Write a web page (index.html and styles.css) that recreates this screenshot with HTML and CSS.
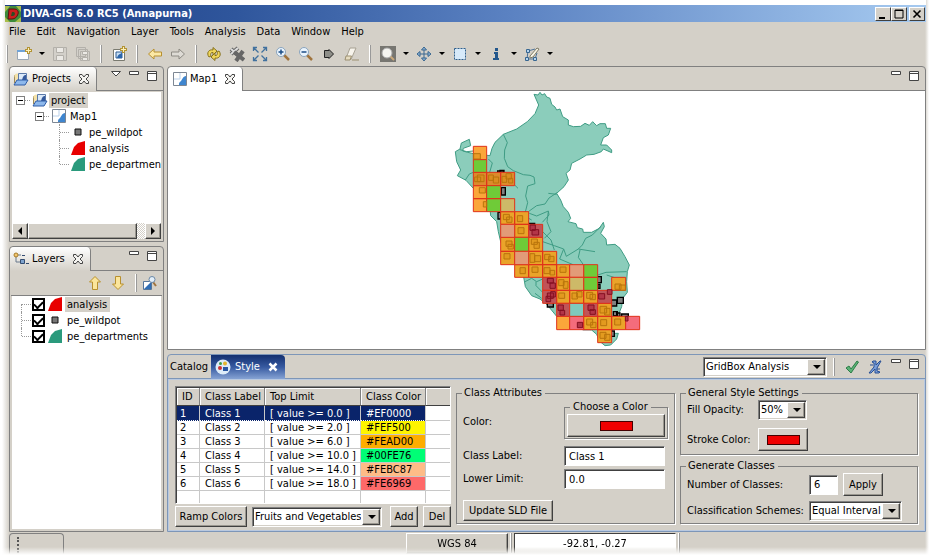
FILE: index.html
```html
<!DOCTYPE html>
<html lang="en">
<head>
    <meta charset="UTF-8">
    <meta name="viewport" content="width=device-width, initial-scale=1.0">
    <title>DIVA-GIS 6.0 RC5 (Annapurna)</title>
    <link rel="stylesheet" href="styles.css">
</head>
<body>
    <!-- shared icons -->
    <svg class="defs" width="0" height="0">
        <symbol id="i-close" viewBox="0 0 12 12"><path d="M1.5 1.5h2.5l2 2.5 2-2.5h2.5v2L8 6l2.500 2.500v2H8L6 8l-2 2.500H1.500v-2L4 6 1.500 3.500z" fill="#f4f3f0" stroke="#444"/></symbol>
        <symbol id="i-min" viewBox="0 0 12 12"><path d="M1.500 1.500h9v3h-9z" fill="#fff" stroke="#444"/></symbol>
        <symbol id="i-max" viewBox="0 0 12 12"><path d="M1.500 1.500h9v9h-9zM1.500 3.500h9" fill="#fff" stroke="#444"/></symbol>
        <symbol id="i-map" viewBox="0 0 14 14"><path d="M.5.5h13v13H.5z" fill="#fff" stroke="#7d8794"/><path d="M1 7h6M7 1v6" stroke="#b9d0ea"/><path d="M6 13c0-3 1-3 2-4s2-5 5-5v9z" fill="#3f86cf"/></symbol>
        <symbol id="i-folder" viewBox="0 0 16 14"><path d="M1.500 11V3.500h4V6" fill="#f3dfae" stroke="#9b8a5b"/><circle cx="4" cy="4" r="2.500" fill="#f5e2a8"/><path d="M5.500 1.500h8v8h-8z" fill="#dbe9f8" stroke="#5b79a8"/><path d="M9 8c1-4 2-5 4-5v6H9z" fill="#34599c"/><path d="M1 13L4 8h11l-3 5z" fill="#8db8ec" stroke="#2f5ca6"/></symbol>
        <symbol id="i-point" viewBox="0 0 14 14"><path d="M4 4h6v6H4z" fill="#777" stroke="#111"/></symbol>
        <symbol id="i-red" viewBox="0 0 14 14"><path d="M0 14L3 6l4-4 7-2v14z" fill="#e80000"/></symbol>
        <symbol id="i-green" viewBox="0 0 14 14"><path d="M0 14L3 6l4-4 7-2v14z" fill="#2a9a7c"/></symbol>
    </svg>

    <div class="window">
        <header class="titlebar">
            <svg class="logo" width="16" height="16" viewBox="0 0 16 16"><path d="M0 0h16v16H0z" fill="#3d8a3a"/><path d="M0 0h5L0 6zM11 0h5v6zM0 11l5 5H0zM16 11v5h-6z" fill="#a9bd4b"/><path d="M4 3h5c3 0 5 2 4 5s-3 5-6 5H3z" fill="#c81e1e" stroke="#5c1111"/><path d="M7 6h1.500c2 0 2 4-1 4H6z" fill="#2b4b23"/></svg>
            <h1>DIVA-GIS 6.0 RC5 (Annapurna)</h1>
            <div class="win-buttons">
                <button aria-label="Minimize"><svg width="10" height="10"><path d="M1 8h6v2H1z"/></svg></button>
                <button aria-label="Maximize"><svg width="10" height="10"><path d="M1 1h8v8H1zM1 1.500h8" fill="none" stroke="#000"/></svg></button>
                <button class="quit" aria-label="Close"><svg width="10" height="10"><path d="M1.500 1.500l7 7M8.500 1.500l-7 7" fill="none" stroke="#000" stroke-width="1.600"/></svg></button>
            </div>
        </header>

        <nav class="menubar">
            <a href="#">File</a><a href="#">Edit</a><a href="#">Navigation</a><a href="#">Layer</a><a href="#">Tools</a><a href="#">Analysis</a><a href="#">Data</a><a href="#">Window</a><a href="#">Help</a>
        </nav>

        <div class="toolbar">
            <span class="sep first"></span>
            <button aria-label="New"><svg width="16" height="16" viewBox="0 0 16 16"><path d="M1.500 4.500h11v9h-11z" fill="#fbfdff" stroke="#9aa7b5"/><path d="M1 4h9v2H1z" fill="#6fa3d8"/><path d="M12.500 1v7M9 4.500h7" stroke="#b39436" stroke-width="3"/><path d="M12.500 2v5M10 4.500h5" stroke="#fdf0b8"/></svg></button>
            <button class="drop" aria-label="New menu"></button>
            <button aria-label="Save"><svg width="16" height="16" viewBox="0 0 16 16" fill="#d3d0ca" stroke="#b3b0aa"><path d="M1.500 1.500h13v13h-13z"/><path d="M4.500 1.500h7v5h-7zM4.500 9.500h7v5h-7z" fill="#eceae6"/></svg></button>
            <button aria-label="Save all"><svg width="16" height="16" viewBox="0 0 16 16" fill="#d3d0ca" stroke="#b3b0aa"><path d="M1.500 1.500h9v9h-9zM3.500 3.500h9v9h-9zM5.500 5.500h9v9h-9z"/><path d="M7.500 5.500h5v3h-5zM7.500 11.500h5v3h-5z" fill="#eceae6"/></svg></button>
            <span class="sep"></span>
            <button aria-label="New map"><svg width="16" height="16" viewBox="0 0 16 16"><path d="M2.500 3.500h11v11h-11z" fill="#fff" stroke="#7a7a70"/><path d="M5 6h6v6H5z" fill="#c8def3" stroke="#2c5c94"/><path d="M6 12c1-4 3-4 5-5v5z" fill="#2c66ab"/><path d="M12.500 0v7M9 3.500h7" stroke="#b39436" stroke-width="3"/><path d="M12.500 1v5M10 3.500h5" stroke="#fdf0b8"/></svg></button>
            <span class="sep"></span>
            <button aria-label="Back"><svg width="16" height="16" viewBox="0 0 16 16"><path d="M1.500 8L7 3v3h7.500v4H7v3z" fill="#fbe8a6" stroke="#b8902f"/></svg></button>
            <button aria-label="Forward"><svg width="16" height="16" viewBox="0 0 16 16"><path d="M14.500 8L9 3v3H1.500v4H9v3z" fill="#dedbd5" stroke="#8e8b84"/></svg></button>
            <span class="sep"></span>
            <button aria-label="Refresh"><svg width="16" height="16" viewBox="0 0 16 16"><path d="M3 11C0 7 3 3 7 4V1.500L11 5 7 9V6.500C5 6 4 8 5 10zM13 5c3 4 0 8-4 7v2.500L5 11l4-4v2.500c2 .5 3-1.500 2-3.500z" fill="#f0d659" stroke="#86711d"/></svg></button>
            <button aria-label="Stop rendering"><svg width="16" height="16" viewBox="0 0 16 16"><path d="M2 3l8 7M9 2L2 8" stroke="#666" stroke-width="4"/><path d="M2 3l8 7M9 2L2 8" stroke="#ddd" stroke-width="2"/><path d="M5 6l10 8M14 5l-7 10" stroke="#666" stroke-width="4"/></svg></button>
            <button aria-label="Zoom to extent"><svg width="16" height="16" viewBox="0 0 16 16" stroke="#41719e" fill="none"><path d="M1.500 5V1.500H5M11 1.500h3.500V5M14.500 11v3.500H11M5 14.500H1.500V11M2 2l4.500 4.500M14 2L9.500 6.500M14 14L9.500 9.500M2 14l4.500-4.500" stroke-width="1.300"/></svg></button>
            <button aria-label="Zoom in"><svg width="16" height="16" viewBox="0 0 16 16"><path d="M9 9l5 5" stroke="#a0743e" stroke-width="2.500"/><circle cx="6" cy="6" r="4.500" fill="#eaf4fd" stroke="#8aa4bd"/><path d="M3.500 6h5M6 3.500v5" stroke="#1b4d86" stroke-width="1.500"/></svg></button>
            <button aria-label="Zoom out"><svg width="16" height="16" viewBox="0 0 16 16"><path d="M9 9l5 5" stroke="#a0743e" stroke-width="2.500"/><circle cx="6" cy="6" r="4.500" fill="#eaf4fd" stroke="#8aa4bd"/><path d="M3.500 6h5" stroke="#1b4d86" stroke-width="1.500"/></svg></button>
            <button aria-label="Go to"><svg width="16" height="16" viewBox="0 0 16 16"><path d="M3.500 4.500H8v-1l4.500 4.500L8 12.500v-1H3.500z" fill="#8e8e88" stroke="#222"/></svg></button>
            <button aria-label="Clear"><svg width="16" height="16" viewBox="0 0 16 16"><path d="M6 2h6L7 13.500H1.500z" fill="#f7f4ec" stroke="#a8a294"/><path d="M2 10h5.500L6 14H1zM8 14h7" fill="#e6dcc0" stroke="#9b8f70"/></svg></button>
            <span class="sep"></span>
            <button aria-label="Zoom tool"><svg width="16" height="16" viewBox="0 0 16 16"><path d="M0 0h16v16H0z" fill="#777671"/><path d="M10 10l4 4" stroke="#c9a87a" stroke-width="2"/><circle cx="7" cy="7" r="5" fill="#f4f4f0" stroke="#aaa"/></svg></button>
            <button class="drop" aria-label="Zoom tools"></button>
            <button aria-label="Pan"><svg width="16" height="16" viewBox="0 0 16 16"><path d="M8 2v12M2 8h12" stroke="#386690"/><path d="M8 1l2.500 3h-5zM8 15l2.500-3h-5zM1 8l3-2.500v5zM15 8l-3-2.500v5z" fill="#8fb4d6" stroke="#386690"/></svg></button>
            <button class="drop" aria-label="Pan tools"></button>
            <button aria-label="Select"><svg width="16" height="16" viewBox="0 0 16 16"><path d="M2.500 2.500h11v11h-11z" fill="#d7eafa" stroke="#2f5f8c" stroke-dasharray="2 1"/></svg></button>
            <button class="drop" aria-label="Selection tools"></button>
            <button aria-label="Info"><svg width="16" height="16" viewBox="0 0 16 16" fill="#23578c"><path d="M7 2h3v3H7zM6 6h4v6h1v2H5v-2h2V8H6z"/></svg></button>
            <button class="drop" aria-label="Info tools"></button>
            <button aria-label="Edit geometry"><svg width="16" height="16" viewBox="0 0 16 16"><path d="M3 13L4 5l7-2M3 13h8l2-6" fill="none" stroke="#4c7299"/><path d="M1.500 11.500h3v3h-3zM2.500 3.500h3v3h-3zM9.500 11.500h3v3h-3z" fill="#b4d3ee" stroke="#386690"/><path d="M6 10l7-8 2 1-6 8-3 1z" fill="#f7f4e6" stroke="#7e7a66"/></svg></button>
            <button class="drop" aria-label="Edit tools"></button>
        </div>

        <main class="workbench">
            <div class="side">
                <section class="panel projects">
                    <div class="tabs">
                        <div class="tab active"><svg width="16" height="14"><use href="#i-folder"/></svg><span>Projects</span><svg class="x" width="12" height="12"><use href="#i-close"/></svg></div>
                        <div class="tools">
                            <svg width="12" height="12" viewBox="0 0 12 12"><path d="M1.500 1.500h9L6 6z" fill="#fff" stroke="#444"/></svg>
                            <svg width="12" height="12"><use href="#i-min"/></svg>
                            <svg width="12" height="12"><use href="#i-max"/></svg>
                        </div>
                    </div>
                    <div class="sheet">
                        <ul class="tree">
                            <li>
                                <div class="row"><span class="toggle"><i></i></span><svg width="16" height="14"><use href="#i-folder"/></svg><span class="label picked">project</span></div>
                                <ul>
                                    <li>
                                        <div class="row"><span class="toggle"><i></i></span><svg width="14" height="14"><use href="#i-map"/></svg><span class="label">Map1</span></div>
                                        <ul>
                                            <li class="leaf"><div class="row"><span class="toggle"></span><svg width="14" height="14"><use href="#i-point"/></svg><span class="label">pe_wildpot</span></div></li>
                                            <li class="leaf"><div class="row"><span class="toggle"></span><svg width="14" height="14"><use href="#i-red"/></svg><span class="label">analysis</span></div></li>
                                            <li class="leaf"><div class="row"><span class="toggle"></span><svg width="14" height="14"><use href="#i-green"/></svg><span class="label">pe_departments</span></div></li>
                                        </ul>
                                    </li>
                                </ul>
                            </li>
                        </ul>
                        <div class="scrollbar">
                            <button aria-label="Scroll left"><svg width="8" height="8"><path d="M6 0v8L2 4z"/></svg></button>
                            <span class="thumb"></span><span class="track"></span>
                            <button aria-label="Scroll right"><svg width="8" height="8"><path d="M2 0v8l4-4z"/></svg></button>
                        </div>
                    </div>
                </section>

                <section class="panel layers">
                    <div class="tabs">
                        <div class="tab active"><svg width="16" height="14" viewBox="0 0 16 14"><path d="M3 4v6h4M5 3h3" fill="none" stroke="#68788c"/><circle cx="3" cy="3" r="2" fill="#f3c66d" stroke="#a67b28"/><path d="M7.500 7.500h4v4h-4z" fill="#7fa4cf" stroke="#344d71"/><path d="M9 3.500h3M13 11.500h3" stroke="#344d71"/></svg><span>Layers</span><svg class="x" width="12" height="12"><use href="#i-close"/></svg></div>
                        <div class="tools">
                            <svg width="12" height="12"><use href="#i-min"/></svg>
                            <svg width="12" height="12"><use href="#i-max"/></svg>
                        </div>
                    </div>
                    <div class="layer-tools">
                        <button aria-label="Move up"><svg width="14" height="14" viewBox="0 0 14 14"><path d="M7 .5L12.500 6H9.500v7.500h-5V6h-3z" fill="#fbe59b" stroke="#b8902f"/></svg></button>
                        <button aria-label="Move down"><svg width="14" height="14" viewBox="0 0 14 14"><path d="M7 13.500L12.500 8H9.500V.5h-5V8h-3z" fill="#fbe59b" stroke="#b8902f"/></svg></button>
                        <span class="sep"></span>
                        <button aria-label="Zoom to layer"><svg width="14" height="14" viewBox="0 0 14 14"><path d="M.5 5.500h8v8h-8z" fill="#fff" stroke="#55759a"/><path d="M1 13l7-7v7z" fill="#2f6db5"/><path d="M10 6l3 4" stroke="#a0743e" stroke-width="2"/><circle cx="9" cy="3.500" r="3" fill="#e3effa" stroke="#6a87a6"/></svg></button>
                    </div>
                    <div class="sheet">
                        <ul class="layer-list">
                            <li class="leaf"><span class="toggle"></span><input type="checkbox" id="l1" checked><svg width="14" height="14"><use href="#i-red"/></svg><label class="label picked" for="l1">analysis</label></li>
                            <li class="leaf"><span class="toggle"></span><input type="checkbox" id="l2" checked><svg width="14" height="14"><use href="#i-point"/></svg><label class="label" for="l2">pe_wildpot</label></li>
                            <li class="leaf"><span class="toggle"></span><input type="checkbox" id="l3" checked><svg width="14" height="14"><use href="#i-green"/></svg><label class="label" for="l3">pe_departments</label></li>
                        </ul>
                    </div>
                </section>
            </div>

            <div class="center">
                <section class="panel map">
                    <div class="tabs">
                        <div class="tab active"><svg width="14" height="14"><use href="#i-map"/></svg><span>Map1</span><svg class="x" width="12" height="12"><use href="#i-close"/></svg></div>
                        <div class="tools">
                            <svg width="12" height="12"><use href="#i-min"/></svg>
                            <svg width="12" height="12"><use href="#i-max"/></svg>
                        </div>
                    </div>
                    <div class="canvas">
                        <svg width="217" height="257" viewBox="-6 18 651 771">
                            <!-- country and departments -->
                            <path class="land" d="M282 28L294 30 300 22 306 30 314 26 320 36 330 40 335 58 345 66 350 75 360 72 368 95 385 105 385 120 400 125 422 124 435 115 448 121 458 110 470 122 480 116 496 116 500 130 512 130 505 150 490 158 482 180 500 180 515 195 515 203 490 192 484 200 462 208 440 210 420 222 395 235 390 255 378 265 385 285 372 305 350 325 362 345 370 365 385 382 392 400 384 410 408 416 412 428 428 432 430 442 455 442 478 430 490 412 493 425 482 445 498 462 500 480 525 478 540 490 555 515 568 540 562 560 560 590 562 622 548 640 545 665 535 690 545 702 520 722 514 745 535 745 530 762 512 780 495 782 478 768 470 748 455 735 430 726 390 720 350 694 322 660 300 642 275 632 256 605 250 570 235 555 224 530 200 510 182 470 175 440 170 410 152 392 150 370 130 340 100 310 78 286 52 272 62 255 50 230 46 200 60 192 64 174 88 163 92 182 70 190 68 198 100 206 150 212 156 190 165 172 190 148 230 132 262 110 285 86 296 60z"/>
                            <path class="border" d="M60 194l20 6 20 -2M76 285l12-18 12-5M145 222l12 12-8 28M190 148l12 25-8 22-1 25 10 25 17 12 30 12 20 2 12 5 3 20-22 7-6 30 6 20-10 40 22 12M265 380l25-18 25-5 12-18 24-16M268 385l22 8 35-15 2 12-20 22M325 325l25 3M325 380l-4 30 12 30-20 20M308 470l35 12 28 10 8 22 36-22M308 440l25 25 10 30M415 492l12-12 10-20 20-10 25-25M371 492l-12 30 40 17M420 495l-5 22 15 22M415 492l50 8M473 570l25-8 62-2M500 570l30 10M255 590l20-10 15 10 18-8M288 590l0 12 20 20M285 625l20 15M152 302l20 0M224 300l10 10"/>
                            <!-- sampling points -->
                            <g class="pts">
                                <path d="M173 258h18v10h-18zM184 308h12v22h-12zM180 256h12v10h-12zM174 382h8v20h-8zM268 415h16v12h-16zM322 652h18v14h-18zM468 575h16v18h-16zM474 598h6v12h-6zM532 637h18v18h-18zM514 645h16v18h-16zM520 680h12v12h-12zM530 684h10v10h-10zM545 687h20v16h-20zM430 722h22v12h-22zM505 738h18v16h-18z"/>
                            </g>
                            <!-- grid cells -->
                            <g class="grid">
                                <path class="amber" d="M100 184h40v40h-40zM100 302h40v39h-40zM100 341h40v39h-40zM350 694h39v40h-39z"/>
                                <path class="ochre" d="M100 262h40v40h-40zM140 262h42v40h-42zM182 262h42v40h-42z"/>
                                <path class="orange" d="M182 380h42v38h-42zM224 380h42v38h-42zM224 418h42v39h-42zM182 457h42v42h-42zM266 457h42v42h-42zM182 499h42v40h-42zM266 499h42v40h-42zM308 499h42v40h-42zM224 539h42v38h-42zM266 539h42v38h-42zM308 539h42v38h-42zM350 539h39v38h-39zM350 577h39v39h-39zM515 577h42v39h-42zM350 616h39v39h-39zM389 616h42v39h-42zM431 616h42v39h-42zM473 655h42v39h-42zM431 694h42v40h-42zM473 694h42v40h-42zM515 694h42v40h-42zM473 734h42v39h-42z"/>
                                <path class="lime" d="M100 224h40v38h-40zM140 302h42v39h-42zM140 341h42v39h-42zM224 457h42v42h-42zM431 539h42v38h-42zM431 577h42v39h-42z"/>
                                <path class="salmon" d="M182 418h42v39h-42zM224 499h42v40h-42zM389 539h42v38h-42z"/>
                                <path class="olive" d="M182 341h42v39h-42zM389 577h42v39h-42z"/>
                                <path class="wine" d="M266 418h42v39h-42zM308 577h42v39h-42zM308 616h42v39h-42zM473 616h42v39h-42zM350 655h39v39h-39zM431 655h42v39h-42z"/>
                                <path class="pink" d="M389 694h42v40h-42zM557 694h42v40h-42z"/>
                                <path class="empty" d="M389 655h42v39h-42z"/>
                            </g>
                            <path class="marks" d="M101 206h20v16h-20zM112 270h20v20h-20zM104 276h18v14h-18zM146 270h14v16h-14zM160 276h16v18h-16zM186 274h14v18h-14zM198 266h16v16h-16zM206 280h12v14h-12zM118 308h18v16h-18zM130 350h10v16h-10zM190 388h18v16h-18zM200 396h16v16h-16zM232 392h16v18h-16zM234 428h18v18h-18zM198 468h18v16h-18zM204 478h16v14h-16zM274 462h18v16h-18zM282 472h16v18h-16zM192 506h18v16h-18zM270 506h14v26h-14zM284 512h18v18h-18zM314 508h16v16h-16zM326 514h16v16h-16zM240 548h16v18h-16zM276 546h18v16h-18zM312 548h18v18h-18zM330 556h14v14h-14zM360 546h18v16h-18zM356 584h16v18h-16zM370 590h14v20h-14zM525 597h18v16h-18zM538 600h18v16h-18zM356 624h18v16h-18zM396 624h16v18h-16zM410 620h16v16h-16zM440 622h18v18h-18zM450 628h16v16h-16zM480 664h20v20h-20zM494 670h16v20h-16zM440 702h18v18h-18zM452 712h16v16h-16zM482 704h18v18h-18zM524 702h18v18h-18zM480 742h18v18h-18zM494 748h16v18h-16z"/>
                            <path class="marks-red" d="M270 420h16v16h-16zM276 434h20v16h-20zM322 580h18v14h-18zM330 594h16v16h-16zM322 624h18v16h-18zM318 634h14v16h-14zM332 620h14v16h-14zM354 660h16v16h-16zM360 676h14v14h-14zM444 660h18v16h-18zM450 674h16v14h-16zM476 626h18v16h-18zM502 614h14v14h-14zM412 712h16v16h-16zM556 694h8v14h-8z"/>
                        </svg>
                    </div>
                </section>

                <section class="panel style">
                    <div class="tabs">
                        <div class="tab">Catalog</div>
                        <div class="tab focus"><svg width="16" height="16" viewBox="0 0 16 16"><circle cx="8" cy="8" r="7.500" fill="#dcebf8"/><circle cx="5" cy="9" r="2" fill="#c33"/><circle cx="10" cy="4.500" r="2" fill="#e3b52c"/><circle cx="5.500" cy="4.500" r="1.500" fill="#3b9a46"/><path d="M8 8h5v4H8z" fill="#2857a3"/></svg><span>Style</span><svg class="x" width="10" height="10" viewBox="0 0 10 10"><path d="M1.500 1.500l7 7M8.500 1.500l-7 7" stroke="#fff" stroke-width="2.500"/></svg></div>
                        <span class="combo styler"><select aria-label="Style type"><option>GridBox Analysis</option></select></span>
                        <span class="sep"></span>
                        <button class="flat" aria-label="Apply style"><svg width="14" height="14" viewBox="0 0 14 14"><path d="M1 8l3-2 2 3 6-8 1.500 1L6 13z" fill="#5cb377" stroke="#2d7d47"/></svg></button>
                        <button class="flat" aria-label="Revert style"><svg width="14" height="14" viewBox="0 0 14 14"><path d="M5 1h3v4l4-4h1L9 8v3l3 1-1 1H7V9l-4 4H1l5-6V3L4 2zM2 5h3M9 9h3" fill="#7b9fda" stroke="#284f94"/></svg></button>
                        <div class="tools">
                            <svg width="12" height="12"><use href="#i-min"/></svg>
                            <svg width="12" height="12"><use href="#i-max"/></svg>
                        </div>
                    </div>

                    <div class="style-body">
                        <div class="classes">
                            <div class="table-box">
                                <table>
                                    <colgroup><col class="c-id"><col class="c-label"><col class="c-limit"><col class="c-color"><col></colgroup>
                                    <thead><tr><th>ID</th><th>Class Label</th><th>Top Limit</th><th>Class Color</th><th></th></tr></thead>
                                    <tbody>
                                        <tr class="selected"><td>1</td><td>Class 1</td><td>[ value &gt;= 0.0 ]</td><td>#EF0000</td><td></td></tr>
                                        <tr><td>2</td><td>Class 2</td><td>[ value &gt;= 2.0 ]</td><td class="k2">#FEF500</td><td></td></tr>
                                        <tr><td>3</td><td>Class 3</td><td>[ value &gt;= 6.0 ]</td><td class="k3">#FEAD00</td><td></td></tr>
                                        <tr><td>4</td><td>Class 4</td><td>[ value &gt;= 10.0 ]</td><td class="k4">#00FE76</td><td></td></tr>
                                        <tr><td>5</td><td>Class 5</td><td>[ value &gt;= 14.0 ]</td><td class="k5">#FEBC87</td><td></td></tr>
                                        <tr><td>6</td><td>Class 6</td><td>[ value &gt;= 18.0 ]</td><td class="k6">#FE6969</td><td></td></tr>
                                        <tr class="blank"><td></td><td></td><td></td><td></td><td></td></tr>
                                    </tbody>
                                </table>
                            </div>
                            <div class="ramp">
                                <button class="btn ramp-btn">Ramp Colors</button>
                                <span class="combo"><select aria-label="Color ramp"><option>Fruits and Vegetables</option></select></span>
                                <button class="btn">Add</button>
                                <button class="btn">Del</button>
                            </div>
                        </div>

                        <fieldset class="attributes">
                            <legend>Class Attributes</legend>
                            <div class="form">
                                <span>Color:</span>
                                <fieldset class="chooser"><legend>Choose a Color</legend><button class="btn" aria-label="Choose a color"><i class="swatch"></i></button></fieldset>
                                <label for="class-label">Class Label:</label><input type="text" id="class-label" value="Class 1">
                                <label for="lower">Lower Limit:</label><input type="text" id="lower" value="0.0">
                            </div>
                            <button class="btn">Update SLD File</button>
                        </fieldset>

                        <div class="settings">
                            <fieldset class="general">
                                <legend>General Style Settings</legend>
                                <div class="line">
                                    <label for="opacity">Fill Opacity:</label>
                                    <span class="combo"><select id="opacity"><option>50%</option></select></span>
                                </div>
                                <div class="line">
                                    <span class="name">Stroke Color:</span>
                                    <button class="btn stroke" aria-label="Stroke color"><i class="swatch"></i></button>
                                </div>
                            </fieldset>
                            <fieldset class="generate">
                                <legend>Generate Classes</legend>
                                <div class="line">
                                    <label for="count">Number of Classes:</label>
                                    <input type="text" id="count" value="6">
                                    <button class="btn">Apply</button>
                                </div>
                                <div class="line">
                                    <label for="scheme">Classification Schemes:</label>
                                    <span class="combo"><select id="scheme"><option>Equal Interval</option></select></span>
                                </div>
                            </fieldset>
                        </div>
                    </div>
                </section>
            </div>
        </main>

        <footer class="statusbar">
            <div class="fastview"><i></i></div>
            <div class="status-right">
                <button class="btn crs">WGS 84</button>
                <span class="sep"></span>
                <div class="coords">-92.81, -0.27</div>
                <span class="sep"></span>
            </div>
        </footer>
    </div>
</body>
</html>
```
FILE: styles.css
```css
:root {
    --face: #d4d0c8;
    --dark: #808080;
    --ink: #000;
    --blue: #7d96b8;
}

* {
    box-sizing: border-box;
}

body {
    margin: 0;
    background: #fff;
    color: var(--ink);
    font: 11px/14px 'DejaVu Sans Condensed', Tahoma, 'DejaVu Sans', sans-serif;
}

button, input, select {
    font: inherit;
    color: inherit;
    margin: 0;
}

button {
    padding: 0;
    border: none;
    background: none;
}

ul {
    list-style: none;
    margin: 0;
    padding: 0;
}

.defs {
    position: absolute;
}

.window {
    display: flex;
    flex-direction: column;
    min-height: 100vh;
    padding: 5px 9px 4px 5px;
    background:
        linear-gradient(0deg, #fff 4px, transparent 12px),
        linear-gradient(90deg, #fff 2px, var(--face) 9px, var(--face) calc(100% - 10px), #fff calc(100% - 6px));
}

/* title, menu */
.titlebar {
    display: flex;
    align-items: center;
    height: 17px;
    padding-right: 1px;
    background: linear-gradient(90deg, #1c3c84, #2f569c 25%, #5b82c2 55%, #a6caf0);
    box-shadow: 0 -5px 0 #fff;
}

.titlebar h1 {
    flex: 1;
    margin: 0 0 0 2px;
    font-size: 11px;
    line-height: 17px;
    color: #fff;
}

.win-buttons {
    display: flex;
}

.win-buttons button {
    display: flex;
    align-items: center;
    justify-content: center;
    width: 16px;
    height: 14px;
    background: var(--face);
    border: 1px solid;
    border-color: #fff #404040 #404040 #fff;
}

.win-buttons .quit {
    margin-left: 2px;
}

.menubar {
    display: flex;
    gap: 11px;
    height: 20px;
    padding-left: 4px;
    line-height: 20px;
}

.menubar a {
    color: inherit;
    text-decoration: none;
}

.toolbar {
    display: flex;
    align-items: center;
    height: 23px;
    margin-bottom: 1px;
}

.toolbar button {
    display: flex;
    justify-content: center;
    width: 23px;
}

.toolbar .drop {
    width: 13px;
}

.drop::before {
    content: "";
    border: 3px solid transparent;
    border-top-color: #000;
    border-bottom: none;
}

.sep {
    width: 13px;
    height: 18px;
    background: linear-gradient(90deg, #fff 1px, #999 1px) center / 2px 100% no-repeat;
}

.toolbar .first {
    width: 7px;
    background-position: 1px 0;
}

/* views */
.workbench {
    flex: 1;
    display: grid;
    grid-template-columns: 155px 1fr;
    gap: 3px;
    padding-left: 4px;
}

.side, .center {
    display: flex;
    flex-direction: column;
    gap: 4px;
    min-width: 0;
}

.panel {
    border: 1px solid var(--dark);
    border-radius: 4px 4px 0 0;
    background: var(--face);
}

.tabs {
    display: flex;
    height: 24px;
    border-bottom: 1px solid var(--dark);
}

.tab {
    display: flex;
    align-items: center;
    padding: 0 2px;
    height: 24px;
}

.tab.active {
    gap: 3px;
    padding: 0 6px 0 3px;
    background: linear-gradient(#fff, var(--face));
    border-right: 1px solid var(--dark);
    border-radius: 4px 4px 0 0;
}

.tab .x {
    margin-left: 4px;
}

.tools {
    display: flex;
    gap: 6px;
    margin-left: auto;
    padding: 3px 5px 0 0;
}

.map .tab.active {
    background: #fff;
    padding-left: 5px;
}

.sheet {
    margin: 1px;
    border: 1px solid var(--face);
    border-top: none;
    background: #fff;
    overflow: hidden;
}

.projects .sheet {
    display: flex;
    flex-direction: column;
    height: 148px;
}

.tree {
    flex: 1;
}

.tree ul {
    margin-left: 19px;
}

.row, .layer-list li {
    display: flex;
    align-items: center;
    height: 16px;
}

.row svg {
    flex: none;
    width: 18px;
}

.label {
    padding: 0 3px 0 2px;
    line-height: 15px;
    white-space: nowrap;
}

.picked {
    background: var(--face);
}

.toggle {
    position: relative;
    flex: none;
    width: 19px;
    height: 16px;
    background: linear-gradient(90deg, #999 50%, transparent 50%) 9px 8px / 2px 1px repeat-x;
    background-clip: content-box;
    padding-left: 9px;
}

.toggle i {
    position: absolute;
    left: 4px;
    top: 4px;
    width: 9px;
    height: 9px;
    border: 1px solid var(--dark);
    background: linear-gradient(#000, #000) center / 5px 1px no-repeat #fff;
}

.leaf .toggle {
    border-left: 9px solid transparent;
    padding-left: 0;
}

.leaf .toggle::before {
    content: "";
    position: absolute;
    left: 0;
    top: 0;
    height: 16px;
    border-left: 1px dotted #999;
}

.leaf:last-child .toggle::before {
    height: 8px;
}

.scrollbar {
    display: flex;
    height: 16px;
}

.scrollbar button, .scrollbar .thumb, .btn {
    background: var(--face);
    border: 1px solid;
    border-color: #fff #404040 #404040 #fff;
    box-shadow: inset -1px -1px 0 #9a978f;
}

.scrollbar button {
    display: flex;
    align-items: center;
    justify-content: center;
    width: 16px;
}

.scrollbar .thumb {
    flex: 1;
}

.scrollbar .track {
    width: 8px;
    background: repeating-conic-gradient(#fff 0 25%, var(--face) 0 50%) 0 0 / 2px 2px;
}

.layers {
    flex: 1;
    display: flex;
    flex-direction: column;
}

.layer-tools {
    display: flex;
    align-items: center;
    justify-content: flex-end;
    height: 25px;
    padding-right: 4px;
    margin: 0 1px;
    border-bottom: 1px solid var(--dark);
}

.layer-tools button {
    display: flex;
    justify-content: center;
    width: 23px;
}

.layer-tools button:last-child {
    width: 16px;
}

.layers .sheet {
    flex: 1;
    margin-top: 0;
}

.layer-list svg {
    margin: 0 3px;
}

.layer-list li:first-child .toggle::before {
    top: 8px;
    height: 8px;
}

input[type="checkbox"] {
    appearance: none;
    display: grid;
    place-items: center;
    width: 13px;
    height: 13px;
    margin-left: 1px;
    border: 2px solid #000;
    background: #fff;
}

input[type="checkbox"]:checked::before {
    content: "";
    width: 7px;
    height: 4px;
    border: solid #000;
    border-width: 0 0 2px 2px;
    transform: rotate(-45deg);
}

.map {
    flex: 1;
    display: flex;
    flex-direction: column;
}

.canvas {
    flex: 1;
    display: flex;
    align-items: flex-start;
    justify-content: center;
    background: #fff;
}

.land {
    fill: #8bcdbb;
    stroke: #3f9c84;
    stroke-width: 3;
}

.border {
    fill: none;
    stroke: #3f9c84;
    stroke-width: 3;
}

.pts {
    fill: #808080;
    stroke: #000;
    stroke-width: 4;
}

.grid path {
    stroke: #e0321a;
    stroke-width: 3;
}

.grid .orange { fill: #eaa42a; }
.grid .amber { fill: #fba63a; }
.grid .ochre { fill: #dd8a2c; }
.grid .lime { fill: #6fcb38; }
.grid .salmon { fill: #e29b78; }
.grid .olive { fill: #cdb968; }
.grid .wine { fill: #c05458; }
.grid .pink { fill: #f46c7c; }
.grid .empty { fill: #7fc9bd; }

.marks {
    fill: #d98f14;
    fill-opacity: .5;
    stroke: #b8740c;
    stroke-width: 3;
}

.marks-red {
    fill: #b23548;
    stroke: #840f20;
    stroke-width: 3;
}

/* style view */
.style {
    border-color: var(--blue);
}

.style .tabs {
    align-items: center;
    border-color: var(--blue);
}

.tab.focus {
    gap: 4px;
    margin-left: 1px;
    padding: 0 7px 0 4px;
    color: #fff;
    background: linear-gradient(#14306f, #3659a0 50%, #86a3d4);
    border-radius: 0 4px 0 0;
}

.style .tools {
    margin-left: 0;
    align-self: flex-start;
}

.flat {
    display: flex;
    justify-content: center;
    width: 23px;
}

.flat + .tools {
    padding-left: 4px;
}

.combo {
    position: relative;
    display: inline-flex;
}

.combo select {
    appearance: none;
    width: 100%;
    height: 20px;
    padding: 0 20px 0 2px;
    border: 1px solid;
    border-color: var(--dark) #fff #fff var(--dark);
    border-radius: 0;
    background: #fff;
    box-shadow: inset 1px 1px 0 #404040, inset -1px -1px 0 var(--face);
}

.combo::before {
    content: "";
    position: absolute;
    top: 2px;
    right: 2px;
    bottom: 2px;
    width: 16px;
    background: var(--face);
    border: 1px solid;
    border-color: #fff #404040 #404040 #fff;
    box-shadow: inset -1px -1px 0 #9a978f;
    pointer-events: none;
}

.combo::after {
    content: "";
    position: absolute;
    top: 8px;
    right: 6px;
    border: 4px solid transparent;
    border-top-color: #000;
    border-bottom: none;
    pointer-events: none;
}

.styler {
    width: 124px;
    margin-left: auto;
}

.style-body {
    display: grid;
    grid-template-columns: 276px 1fr 238px;
    gap: 5px;
    align-items: start;
    padding: 7px 7px 4px;
    box-shadow: inset 1px 1px 0 #b9c9e0, inset -1px -1px 0 #b9c9e0;
}

.table-box {
    border: 1px solid;
    border-color: var(--dark) #fff #fff var(--dark);
    box-shadow: inset 1px 1px 0 #404040;
    background: #fff;
    padding: 1px 0 0 1px;
}

table {
    width: 100%;
    table-layout: fixed;
    border-collapse: separate;
    border-spacing: 0;
}

.c-id { width: 23px; }
.c-label { width: 65px; }
.c-limit { width: 96px; }
.c-color { width: 65px; }

th {
    height: 18px;
    padding: 0 0 0 5px;
    font-weight: normal;
    text-align: left;
    white-space: nowrap;
    background: var(--face);
    border-right: 1px solid var(--dark);
    border-bottom: 1px solid #404040;
    box-shadow: inset 1px 1px 0 #fff;
}

td {
    height: 14px;
    padding: 0 0 0 5px;
    line-height: 13px;
    white-space: nowrap;
    border-right: 1px solid #c8c8c8;
    border-bottom: 1px solid #c8c8c8;
}

td:first-child {
    padding-left: 3px;
}

th:last-child, td:last-child {
    border-right: none;
}

tbody tr:first-child td {
    height: 15px;
}

.blank td {
    height: 12px;
    border-bottom: none;
}

.selected td:not(:last-child) {
    background: #0a246a;
    color: #fff;
    border-bottom: 1px dotted #fff;
}

.k2 { background: #fef500; }
.k3 { background: #fead00; }
.k4 { background: #00fe76; }
.k5 { background: #febc87; }
.k6 { background: #fe6969; }

.ramp {
    display: flex;
    align-items: center;
    gap: 5px;
    margin-top: 2px;
}

.ramp .combo {
    width: 130px;
    margin-right: 3px;
}

.btn {
    height: 21px;
    padding: 0 5px;
    white-space: nowrap;
}

.ramp .btn {
    flex: 1;
    padding: 0;
}

.ramp .ramp-btn {
    flex: 0 0 72px;
}

fieldset {
    min-width: 0;
    margin: 0;
    padding: 0 6px;
    border: 1px solid var(--dark);
    box-shadow: 1px 1px 0 #fff;
}

legend {
    margin-left: -1px;
    padding: 0 3px 0 2px;
}

.attributes {
    height: 138px;
}

.form {
    display: grid;
    grid-template-columns: 101px 1fr;
    align-items: center;
    row-gap: 3px;
    margin-bottom: 11px;
}

.chooser {
    margin-bottom: 4px;
    padding: 0 2px 1px;
}

.chooser legend {
    margin-left: 3px;
    padding: 0 3px;
}

.chooser .btn {
    width: 100%;
    height: 23px;
    display: flex;
    align-items: center;
    justify-content: center;
}

.swatch {
    width: 33px;
    height: 10px;
    background: #f00000;
    border: 1px solid #400;
}

input[type="text"] {
    height: 20px;
    width: calc(100% - 3px);
    padding: 0 4px;
    border: 1px solid;
    border-color: var(--dark) #fff #fff var(--dark);
    box-shadow: inset 1px 1px 0 #404040;
    background: #fff;
}

.general {
    height: 69px;
    margin-bottom: 4px;
}

.generate {
    height: 65px;
}

.line {
    display: flex;
    align-items: center;
    white-space: nowrap;
}

.general label, .name {
    width: 71px;
}

.general .line + .line {
    margin-top: 8px;
}

.general .combo {
    width: 49px;
}

.stroke {
    display: flex;
    align-items: center;
    justify-content: center;
    width: 50px;
    height: 23px;
}

.generate label {
    width: 122px;
}

.generate input[type="text"] {
    width: 29px;
    margin-right: 5px;
}

.generate .btn {
    width: 40px;
    height: 23px;
}

.generate .line + .line {
    margin-top: 5px;
}

.generate .combo {
    width: 93px;
}

/* status */
.statusbar {
    display: flex;
    justify-content: space-between;
    height: 23px;
    padding: 1px 0 0 4px;
    mask-image: linear-gradient(#000 65%, transparent 95%);
}

.fastview {
    width: 55px;
    border: 1px solid var(--dark);
    border-bottom: none;
    border-radius: 4px 4px 0 0;
    padding: 3px 7px;
}

.fastview i {
    display: block;
    height: 16px;
    border-left: 2px dotted #555;
}

.status-right {
    display: flex;
    width: 520px;
}

.crs {
    width: 102px;
}

.status-right .sep {
    width: 6px;
    height: 20px;
}

.coords {
    width: 162px;
    height: 21px;
    line-height: 20px;
    text-align: center;
    border: 1px solid;
    border-color: #404040 #fff #fff #404040;
    background: #fff;
}
```
